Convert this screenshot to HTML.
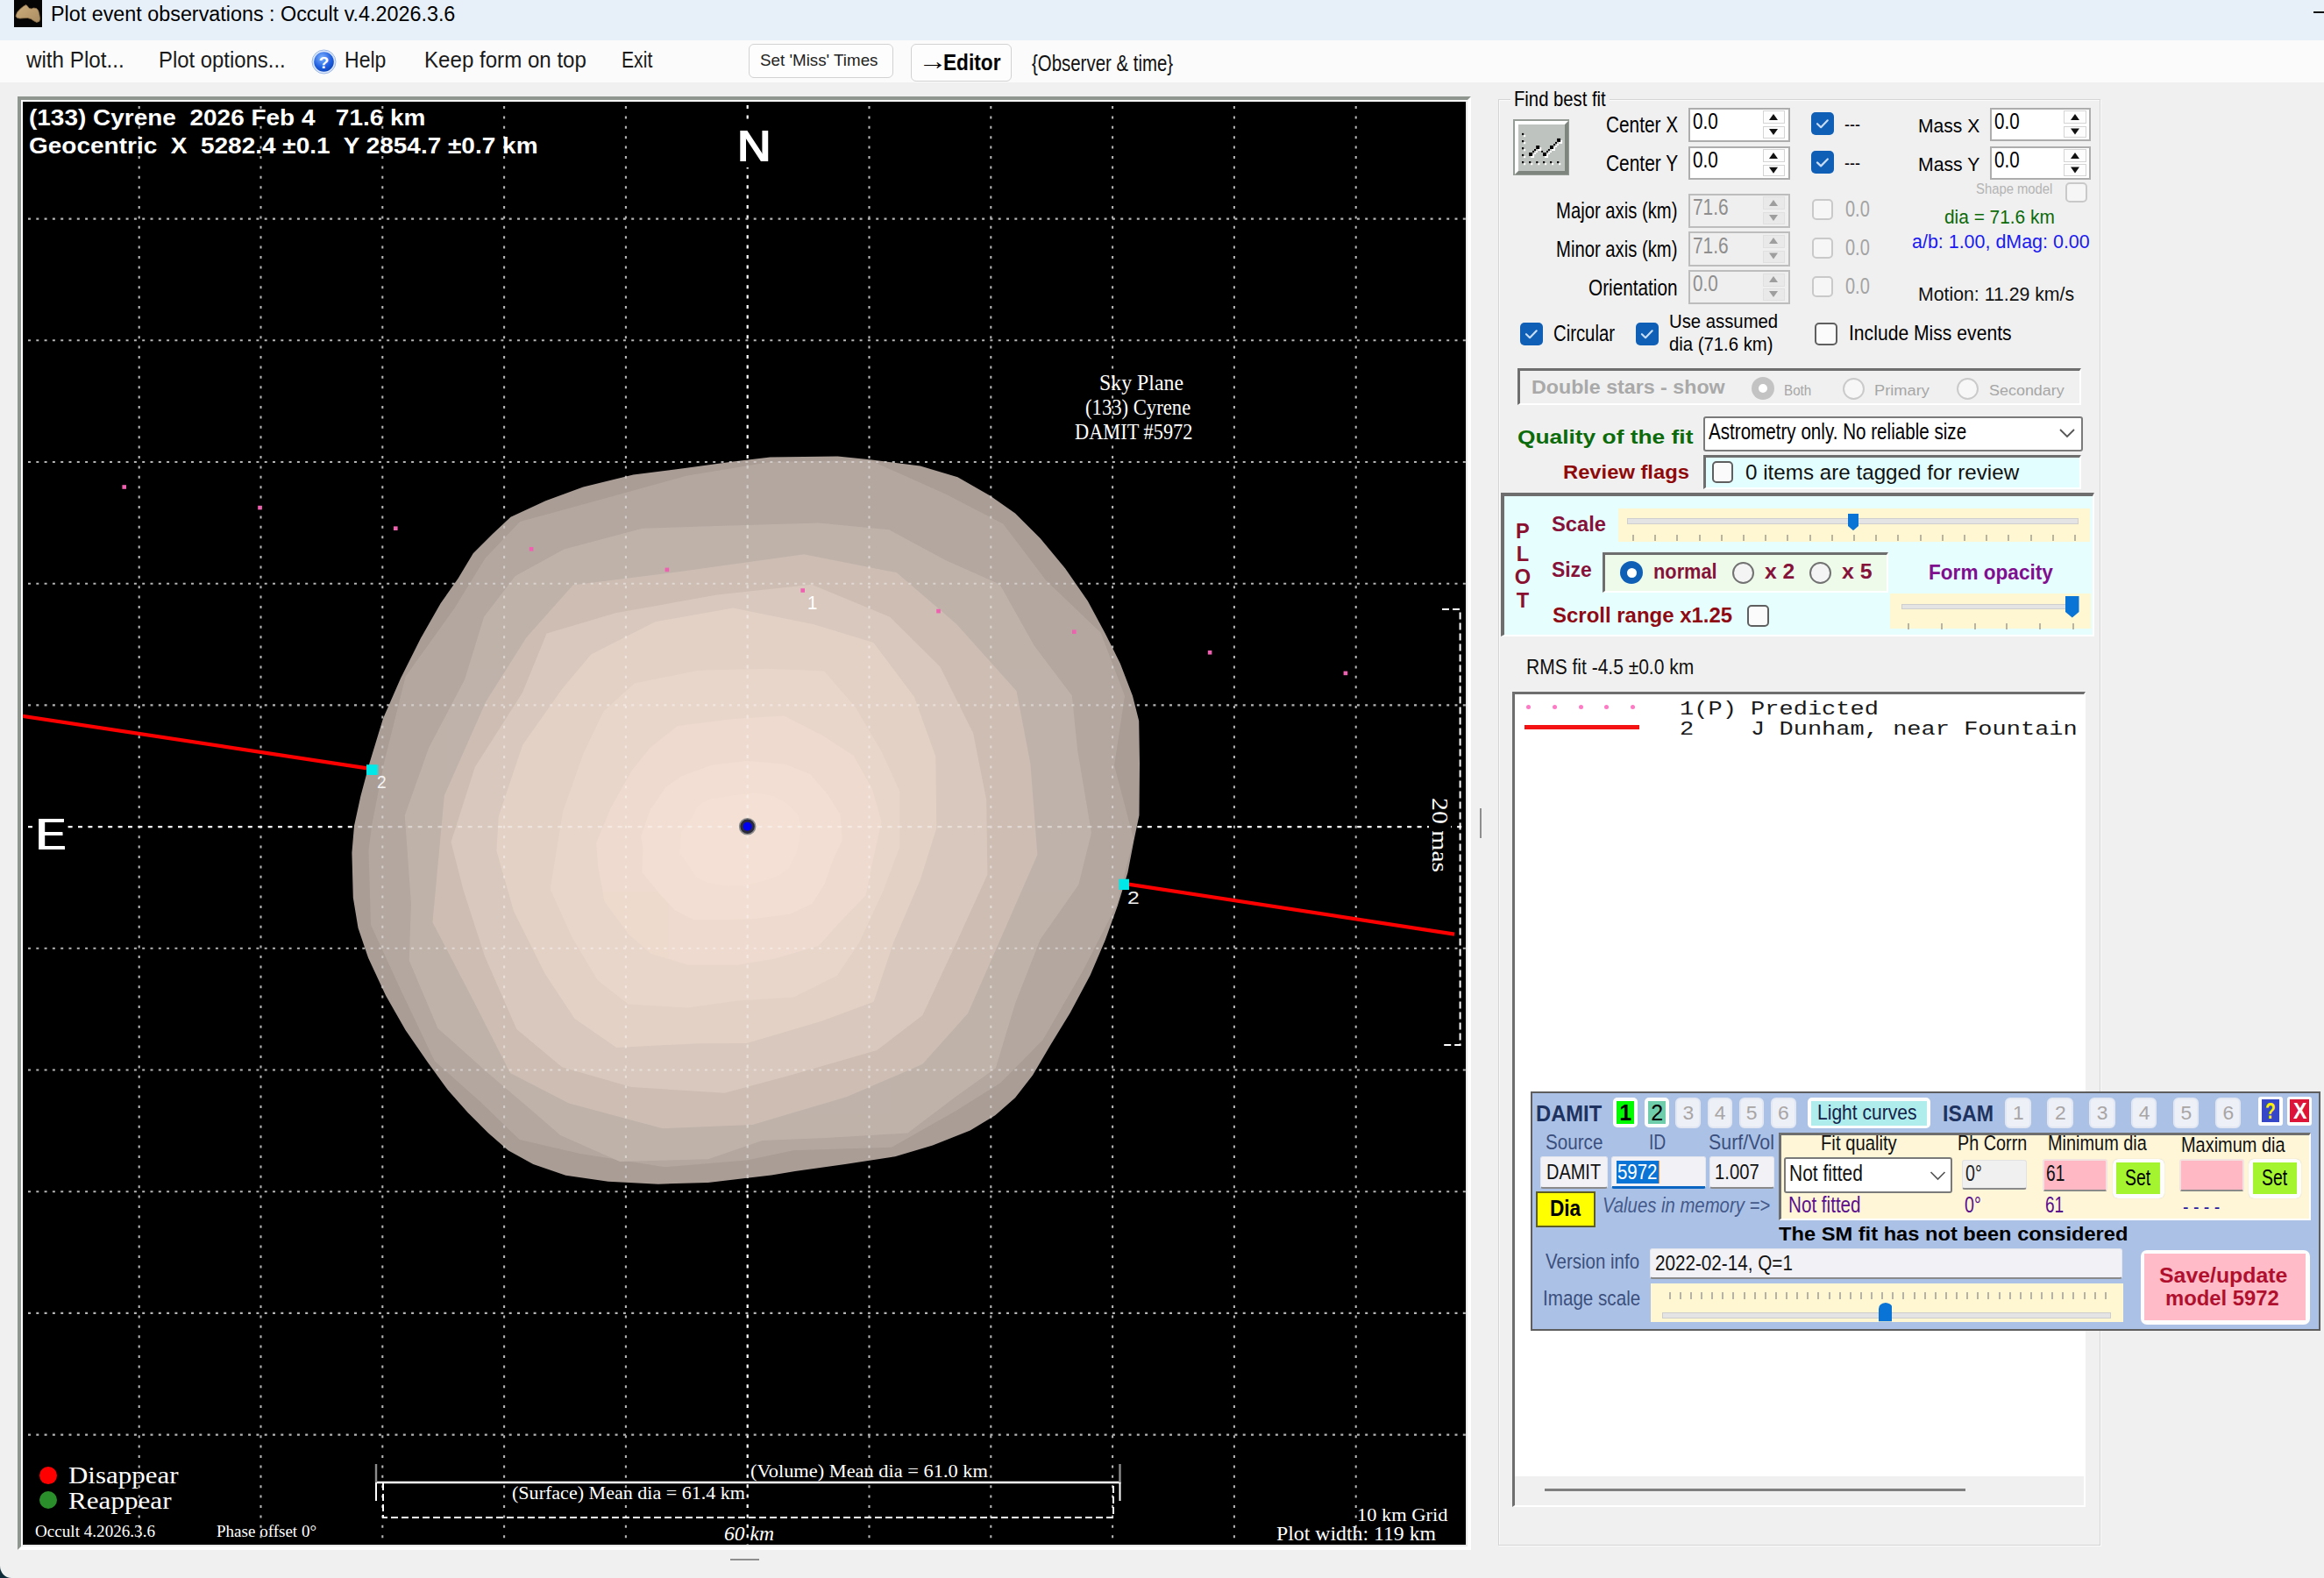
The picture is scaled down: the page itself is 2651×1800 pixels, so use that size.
<!DOCTYPE html><html><head><meta charset="utf-8"><title>Plot event observations : Occult v.4.2026.3.6</title><style>
html,body{margin:0;padding:0}
body{width:2651px;height:1800px;position:relative;overflow:hidden;background:#F0F0F0;font-family:"Liberation Sans",sans-serif;}
div,span.t,svg.abs{position:absolute;box-sizing:border-box}
.t{white-space:pre;line-height:1;transform-origin:0 0;}
.sunk{border-style:solid;border-width:3px 2px 2px 3px;border-color:#6E6E6E #FFFFFF #FFFFFF #6E6E6E}
.cb{border:2px solid #5F5F5F;border-radius:5px;background:#FBFBFB}
.cbd{border:2px solid #C9C9C9;border-radius:5px;background:#F6F6F6}
.cbc{border-radius:5px;background:#0F5FB6}
.num{border:2px solid #ADADAD;background:#fff}
.numd{border:2px solid #BDBDBD;background:#EFEFEF}
.rd{border-radius:50%}
</style></head><body>
<div style="left:0.0px;top:0.0px;width:2651.0px;height:46.0px;background:#E7F0F8"></div>
<div style="left:0.0px;top:46.0px;width:2651.0px;height:48.0px;background:#FBFBFB"></div>
<div style="left:16.0px;top:0.0px;width:31.8px;height:30.8px;background:#050505"><svg width="32" height="31" viewBox="0 0 32 31" style="position:absolute;left:0;top:0"><defs><linearGradient id="ig" x1="0" y1="0" x2="1" y2="1"><stop offset="0" stop-color="#CDAE7C"/><stop offset="1" stop-color="#A98C62"/></linearGradient></defs><path d="M2 18.3 L3.6 14 L7.2 10.1 L11.1 6.9 L13.9 5.6 L15.4 7.1 L17.1 9.3 L19.7 10.1 L22.5 9.1 L25.8 9.7 L27.7 12.1 L28.8 16.2 L29.6 21.6 L28.8 24.4 L25.8 25.4 L22.5 23.7 L19.3 21.6 L15.4 20.5 L11.1 20.7 L6.8 21.1 L3.6 20.5Z" fill="url(#ig)" stroke="#8A7048" stroke-width="0.8" stroke-linejoin="round"/></svg></div>
<span class="t" style="left:58.0px;top:4.3px;font-size:23.92px;color:#000;transform:scaleX(0.9761);">Plot event observations : Occult v.4.2026.3.6</span>
<div style="left:2639.0px;top:13.0px;width:12.0px;height:2.0px;background:#111"></div>
<span class="t" style="left:30.2px;top:56.2px;font-size:24.96px;color:#1A1A1A;transform:scaleX(0.9702);">with Plot...</span>
<span class="t" style="left:180.7px;top:56.2px;font-size:24.96px;color:#1A1A1A;transform:scaleX(0.9568);">Plot options...</span>
<svg class="abs" style="left:355px;top:56px" width="29" height="29" viewBox="0 0 29 29"><defs><radialGradient id="hg" cx="0.4" cy="0.3" r="0.8"><stop offset="0" stop-color="#7FB2FF"/><stop offset="0.6" stop-color="#1F5FE0"/><stop offset="1" stop-color="#0A3FB0"/></radialGradient></defs><circle cx="14.5" cy="14.5" r="13.5" fill="#DCE8FA" stroke="#9DB9E8" stroke-width="1"/><circle cx="14.5" cy="14.5" r="11.3" fill="url(#hg)"/><text x="14.5" y="21.5" text-anchor="middle" font-family="Liberation Sans,sans-serif" font-weight="bold" font-size="19" fill="#fff">?</text></svg>
<span class="t" style="left:393.0px;top:56.2px;font-size:24.96px;color:#1A1A1A;transform:scaleX(0.9233);">Help</span>
<span class="t" style="left:484.3px;top:56.2px;font-size:24.96px;color:#1A1A1A;transform:scaleX(0.9661);">Keep form on top</span>
<span class="t" style="left:709.0px;top:56.2px;font-size:24.96px;color:#1A1A1A;transform:scaleX(0.8484);">Exit</span>
<div style="left:853.6px;top:49.7px;width:165.1px;height:39.2px;background:#FDFDFD;border:1.5px solid #D2D2D2;border-radius:6px"></div>
<span class="t" style="left:866.6px;top:59.5px;font-size:18.72px;color:#222;transform:scaleX(1.0041);">Set 'Miss' Times</span>
<div style="left:1038.9px;top:49.7px;width:115.3px;height:43.1px;background:#FDFDFD;border:1.5px solid #D2D2D2;border-radius:6px"></div>
<span class="t" style="left:1046.5px;top:57.1px;font-size:27.04px;color:#000;font-weight:bold;transform:scaleX(1.2389);">→</span>
<span class="t" style="left:1075.8px;top:58.7px;font-size:24.96px;color:#000;font-weight:bold;transform:scaleX(0.9084);">Editor</span>
<span class="t" style="left:1177.4px;top:60.2px;font-size:24.96px;color:#111;transform:scaleX(0.8183);">{Observer &amp; time}</span>
<div style="left:20.3px;top:110.1px;width:1657.7px;height:1657.9px;border-style:solid;border-width:4px;border-color:#8F958F #FFFFFF #FFFFFF #8F958F;background:#000"></div>
<div style="left:24.3px;top:114.1px;width:1649.7px;height:1649.9px;border-style:solid;border-width:2px;border-color:#FFFFFF #EAEAEA #EAEAEA #FFFFFF;background:#000"></div>
<svg class="abs" style="left:0;top:0" width="2651" height="1800" viewBox="0 0 2651 1800"><defs>
<clipPath id="pc"><rect x="26.2" y="116.2" width="1645.8" height="1645.8"/></clipPath>
<radialGradient id="ag" gradientUnits="userSpaceOnUse" cx="840" cy="925" r="500" fx="830" fy="900">
<stop offset="0" stop-color="#F4E0D4"/><stop offset="0.35" stop-color="#F1DCD0"/><stop offset="0.58" stop-color="#E3CFC4"/><stop offset="0.75" stop-color="#D0BEB4"/><stop offset="0.88" stop-color="#B9A9A1"/><stop offset="1" stop-color="#A1938D"/></radialGradient>
</defs><clipPath id="ac"><path d="M404.0 942.0 L411.4 907.9 L421.4 870.8 L437.0 819.5 L457.0 773.8 L479.8 728.2 L502.6 688.2 L522.6 659.7 L539.7 631.2 L562.5 608.4 L582.5 589.8 L622.4 571.3 L665.2 555.6 L722.3 541.4 L779.3 534.2 L836.4 526.5 L878.5 521.5 L955.5 520.5 L992.6 524.2 L1049.7 531.4 L1092.4 544.2 L1129.5 565.6 L1158.0 585.6 L1186.6 614.0 L1215.0 648.3 L1240.8 685.4 L1260.7 722.5 L1277.8 756.7 L1292.0 793.8 L1299.2 822.3 L1300.0 870.8 L1299.5 930.0 L1293.5 958.5 L1286.4 995.6 L1275.0 1032.7 L1260.7 1072.6 L1243.6 1112.5 L1220.8 1155.3 L1198.0 1192.4 L1178.0 1226.6 L1158.0 1252.3 L1135.2 1272.3 L1106.7 1289.4 L1063.9 1306.5 L1021.1 1319.3 L964.1 1327.9 L907.0 1336.0 L880.0 1340.5 L850.0 1344.0 L807.8 1349.0 L750.8 1350.7 L693.7 1347.8 L645.3 1340.7 L608.2 1327.9 L579.7 1312.2 L556.8 1292.2 L534.0 1269.4 L511.2 1243.8 L488.4 1212.4 L462.7 1175.3 L440.0 1135.4 L420.0 1092.6 L408.5 1058.4 L402.8 1024.1 L401.4 972.8Z"/></clipPath><g clip-path="url(#pc)"><g opacity="1.0" fill="none"><line x1="158.7" y1="121" x2="158.7" y2="1762" stroke="#B4B4B4" stroke-width="2.1" stroke-dasharray="3 8.4"/><line x1="297.5" y1="121" x2="297.5" y2="1762" stroke="#B4B4B4" stroke-width="2.1" stroke-dasharray="3 8.4"/><line x1="436.3" y1="121" x2="436.3" y2="1762" stroke="#B4B4B4" stroke-width="2.1" stroke-dasharray="3 8.4"/><line x1="575.1" y1="121" x2="575.1" y2="1762" stroke="#B4B4B4" stroke-width="2.1" stroke-dasharray="3 8.4"/><line x1="713.9" y1="121" x2="713.9" y2="1762" stroke="#B4B4B4" stroke-width="2.1" stroke-dasharray="3 8.4"/><line x1="852.7" y1="120" x2="852.7" y2="1762" stroke="#FFFFFF" stroke-width="2.2" stroke-dasharray="4 7.4"/><line x1="991.5" y1="121" x2="991.5" y2="1762" stroke="#B4B4B4" stroke-width="2.1" stroke-dasharray="3 8.4"/><line x1="1130.3" y1="121" x2="1130.3" y2="1762" stroke="#B4B4B4" stroke-width="2.1" stroke-dasharray="3 8.4"/><line x1="1269.1" y1="121" x2="1269.1" y2="1762" stroke="#B4B4B4" stroke-width="2.1" stroke-dasharray="3 8.4"/><line x1="1407.9" y1="121" x2="1407.9" y2="1762" stroke="#B4B4B4" stroke-width="2.1" stroke-dasharray="3 8.4"/><line x1="1546.7" y1="121" x2="1546.7" y2="1762" stroke="#B4B4B4" stroke-width="2.1" stroke-dasharray="3 8.4"/><line x1="32" y1="249.6" x2="1672" y2="249.6" stroke="#B4B4B4" stroke-width="2.1" stroke-dasharray="3 6.3"/><line x1="32" y1="388.3" x2="1672" y2="388.3" stroke="#B4B4B4" stroke-width="2.1" stroke-dasharray="3 6.3"/><line x1="32" y1="527.0" x2="1672" y2="527.0" stroke="#B4B4B4" stroke-width="2.1" stroke-dasharray="3 6.3"/><line x1="32" y1="665.7" x2="1672" y2="665.7" stroke="#B4B4B4" stroke-width="2.1" stroke-dasharray="3 6.3"/><line x1="32" y1="804.4" x2="1672" y2="804.4" stroke="#B4B4B4" stroke-width="2.1" stroke-dasharray="3 6.3"/><line x1="32" y1="943.1" x2="1672" y2="943.1" stroke="#FFFFFF" stroke-width="2.1" stroke-dasharray="5 6.4"/><line x1="32" y1="1081.8" x2="1672" y2="1081.8" stroke="#B4B4B4" stroke-width="2.1" stroke-dasharray="3 6.3"/><line x1="32" y1="1220.5" x2="1672" y2="1220.5" stroke="#B4B4B4" stroke-width="2.1" stroke-dasharray="3 6.3"/><line x1="32" y1="1359.2" x2="1672" y2="1359.2" stroke="#B4B4B4" stroke-width="2.1" stroke-dasharray="3 6.3"/><line x1="32" y1="1497.9" x2="1672" y2="1497.9" stroke="#B4B4B4" stroke-width="2.1" stroke-dasharray="3 6.3"/><line x1="32" y1="1636.6" x2="1672" y2="1636.6" stroke="#B4B4B4" stroke-width="2.1" stroke-dasharray="3 6.3"/></g><path d="M404.0 942.0 L411.4 907.9 L421.4 870.8 L437.0 819.5 L457.0 773.8 L479.8 728.2 L502.6 688.2 L522.6 659.7 L539.7 631.2 L562.5 608.4 L582.5 589.8 L622.4 571.3 L665.2 555.6 L722.3 541.4 L779.3 534.2 L836.4 526.5 L878.5 521.5 L955.5 520.5 L992.6 524.2 L1049.7 531.4 L1092.4 544.2 L1129.5 565.6 L1158.0 585.6 L1186.6 614.0 L1215.0 648.3 L1240.8 685.4 L1260.7 722.5 L1277.8 756.7 L1292.0 793.8 L1299.2 822.3 L1300.0 870.8 L1299.5 930.0 L1293.5 958.5 L1286.4 995.6 L1275.0 1032.7 L1260.7 1072.6 L1243.6 1112.5 L1220.8 1155.3 L1198.0 1192.4 L1178.0 1226.6 L1158.0 1252.3 L1135.2 1272.3 L1106.7 1289.4 L1063.9 1306.5 L1021.1 1319.3 L964.1 1327.9 L907.0 1336.0 L880.0 1340.5 L850.0 1344.0 L807.8 1349.0 L750.8 1350.7 L693.7 1347.8 L645.3 1340.7 L608.2 1327.9 L579.7 1312.2 L556.8 1292.2 L534.0 1269.4 L511.2 1243.8 L488.4 1212.4 L462.7 1175.3 L440.0 1135.4 L420.0 1092.6 L408.5 1058.4 L402.8 1024.1 L401.4 972.8Z" fill="#A99D96"/><g clip-path="url(#ac)"><path d="M424.3 940.2 L437.9 870.6 L462.6 771.6 L518.6 693.4 L553.3 637.1 L593.1 594.9 L678.1 571.8 L783.9 542.4 L879.7 526.7 L992.0 524.8 L1078.6 563.4 L1144.3 597.6 L1193.2 662.0 L1255.7 721.8 L1283.1 793.9 L1271.1 872.9 L1293.1 957.1 L1274.2 1031.7 L1234.8 1108.3 L1189.6 1186.3 L1141.3 1235.3 L1090.6 1267.1 L1017.0 1308.7 L905.2 1312.2 L852.0 1323.4 L758.3 1331.3 L661.6 1315.9 L592.6 1300.1 L549.2 1258.0 L495.7 1210.3 L457.0 1129.0 L423.0 1054.9 L420.4 970.3Z" fill="#B3A7A0"/><path d="M461.7 930.3 L489.1 853.1 L530.0 775.2 L552.1 703.6 L587.8 656.9 L643.4 626.6 L732.7 602.8 L833.0 599.4 L933.9 596.4 L1014.4 604.3 L1078.6 639.0 L1140.5 666.5 L1179.6 736.2 L1222.8 793.6 L1229.2 856.0 L1245.0 949.9 L1230.4 1009.1 L1186.7 1071.4 L1158.1 1144.5 L1135.8 1218.6 L1090.2 1250.9 L1035.4 1292.6 L942.4 1298.0 L869.7 1300.9 L807.8 1322.3 L707.0 1325.1 L639.2 1294.9 L598.8 1259.9 L555.6 1223.2 L499.4 1172.9 L466.7 1095.7 L468.9 1030.8Z" fill="#BFB2AA"/><path d="M506.8 907.4 L554.4 799.9 L600.5 727.1 L653.7 667.2 L780.8 651.3 L917.1 632.2 L1022.7 653.1 L1091.0 711.8 L1159.6 788.2 L1175.4 871.0 L1183.4 975.0 L1145.8 1060.9 L1104.1 1156.0 L1052.2 1214.1 L965.7 1251.2 L858.7 1282.9 L755.7 1287.3 L648.9 1258.5 L581.9 1224.1 L539.2 1140.0 L493.4 1052.0Z" fill="#CDBDB3"/><path d="M514.5 960.5 L541.8 875.1 L596.0 790.1 L623.6 722.5 L703.0 699.1 L817.5 678.5 L925.9 666.7 L1015.3 703.8 L1072.4 760.6 L1110.1 836.2 L1125.2 912.6 L1126.4 997.6 L1090.7 1075.9 L1052.3 1158.2 L1000.4 1197.9 L904.3 1225.8 L826.6 1246.8 L720.0 1240.1 L641.1 1217.2 L589.3 1174.1 L552.9 1090.8 L528.6 1015.6Z" fill="#D9C8BD"/><path d="M568.8 931.0 L596.3 849.4 L640.8 786.5 L674.2 746.4 L747.5 709.2 L836.1 693.6 L928.4 712.3 L996.4 732.9 L1042.9 794.9 L1067.3 862.9 L1068.3 944.7 L1049.5 1004.3 L1019.3 1074.7 L996.6 1142.8 L936.5 1165.0 L851.9 1190.0 L796.7 1190.2 L703.3 1194.9 L655.5 1161.9 L621.5 1110.6 L586.0 1039.4 L566.4 970.5Z" fill="#E3D1C6"/><path d="M642.0 925.9 L665.5 859.5 L688.6 811.3 L723.7 779.4 L796.3 764.7 L874.8 762.7 L940.1 765.5 L976.0 807.0 L1006.2 858.4 L1026.4 902.9 L1026.3 966.3 L1006.7 1018.1 L980.7 1073.9 L955.0 1112.8 L905.4 1137.4 L841.4 1141.5 L784.2 1149.4 L716.9 1145.6 L681.8 1118.2 L652.7 1069.8 L627.7 1014.2Z" fill="#E9D6CA"/><path d="M680.1 961.7 L696.7 921.4 L720.6 878.9 L741.5 853.1 L773.0 827.9 L836.4 819.9 L894.2 816.6 L938.4 839.1 L973.7 861.9 L994.8 899.4 L1005.6 937.3 L996.1 979.4 L987.7 1021.1 L955.7 1054.5 L933.8 1079.0 L883.0 1093.7 L841.3 1100.8 L784.2 1100.5 L742.8 1088.1 L717.1 1065.4 L689.7 1028.7 L682.3 989.0Z" fill="#EEDACE"/><path d="M731.2 953.9 L741.5 923.9 L758.9 898.5 L776.8 885.4 L811.5 872.7 L852.3 867.8 L896.2 871.8 L924.4 883.3 L944.0 906.1 L958.6 929.0 L960.7 958.8 L950.4 980.5 L940.7 1008.2 L926.4 1031.1 L901.0 1042.7 L859.7 1048.3 L834.2 1049.1 L791.6 1049.4 L769.4 1037.9 L752.7 1019.9 L732.3 994.9 L733.4 967.8Z" fill="#F2DED2"/><path d="M777.0 949.1 L789.2 932.1 L796.3 918.7 L809.5 911.4 L834.1 907.6 L861.6 904.2 L882.7 907.9 L897.8 916.4 L910.8 929.7 L913.7 943.4 L911.6 960.3 L908.0 974.6 L899.8 990.4 L888.4 999.3 L871.0 1005.0 L849.7 1010.2 L829.3 1010.7 L807.4 1007.0 L794.4 1000.9 L785.3 987.5 L775.4 973.2Z" fill="#F4E0D4"/></g><g clip-path="url(#ac)"><g opacity="0.42" fill="none"><line x1="158.7" y1="121" x2="158.7" y2="1762" stroke="#FFFFFF" stroke-width="2.1" stroke-dasharray="3 8.4"/><line x1="297.5" y1="121" x2="297.5" y2="1762" stroke="#FFFFFF" stroke-width="2.1" stroke-dasharray="3 8.4"/><line x1="436.3" y1="121" x2="436.3" y2="1762" stroke="#FFFFFF" stroke-width="2.1" stroke-dasharray="3 8.4"/><line x1="575.1" y1="121" x2="575.1" y2="1762" stroke="#FFFFFF" stroke-width="2.1" stroke-dasharray="3 8.4"/><line x1="713.9" y1="121" x2="713.9" y2="1762" stroke="#FFFFFF" stroke-width="2.1" stroke-dasharray="3 8.4"/><line x1="852.7" y1="120" x2="852.7" y2="1762" stroke="#FFFFFF" stroke-width="2.2" stroke-dasharray="4 7.4"/><line x1="991.5" y1="121" x2="991.5" y2="1762" stroke="#FFFFFF" stroke-width="2.1" stroke-dasharray="3 8.4"/><line x1="1130.3" y1="121" x2="1130.3" y2="1762" stroke="#FFFFFF" stroke-width="2.1" stroke-dasharray="3 8.4"/><line x1="1269.1" y1="121" x2="1269.1" y2="1762" stroke="#FFFFFF" stroke-width="2.1" stroke-dasharray="3 8.4"/><line x1="1407.9" y1="121" x2="1407.9" y2="1762" stroke="#FFFFFF" stroke-width="2.1" stroke-dasharray="3 8.4"/><line x1="1546.7" y1="121" x2="1546.7" y2="1762" stroke="#FFFFFF" stroke-width="2.1" stroke-dasharray="3 8.4"/><line x1="32" y1="249.6" x2="1672" y2="249.6" stroke="#FFFFFF" stroke-width="2.1" stroke-dasharray="3 6.3"/><line x1="32" y1="388.3" x2="1672" y2="388.3" stroke="#FFFFFF" stroke-width="2.1" stroke-dasharray="3 6.3"/><line x1="32" y1="527.0" x2="1672" y2="527.0" stroke="#FFFFFF" stroke-width="2.1" stroke-dasharray="3 6.3"/><line x1="32" y1="665.7" x2="1672" y2="665.7" stroke="#FFFFFF" stroke-width="2.1" stroke-dasharray="3 6.3"/><line x1="32" y1="804.4" x2="1672" y2="804.4" stroke="#FFFFFF" stroke-width="2.1" stroke-dasharray="3 6.3"/><line x1="32" y1="943.1" x2="1672" y2="943.1" stroke="#FFFFFF" stroke-width="2.1" stroke-dasharray="5 6.4"/><line x1="32" y1="1081.8" x2="1672" y2="1081.8" stroke="#FFFFFF" stroke-width="2.1" stroke-dasharray="3 6.3"/><line x1="32" y1="1220.5" x2="1672" y2="1220.5" stroke="#FFFFFF" stroke-width="2.1" stroke-dasharray="3 6.3"/><line x1="32" y1="1359.2" x2="1672" y2="1359.2" stroke="#FFFFFF" stroke-width="2.1" stroke-dasharray="3 6.3"/><line x1="32" y1="1497.9" x2="1672" y2="1497.9" stroke="#FFFFFF" stroke-width="2.1" stroke-dasharray="3 6.3"/><line x1="32" y1="1636.6" x2="1672" y2="1636.6" stroke="#FFFFFF" stroke-width="2.1" stroke-dasharray="3 6.3"/></g></g><rect x="139.4" y="553.2" width="4.6" height="4.6" fill="#F060B0"/><rect x="294.2" y="576.8" width="4.6" height="4.6" fill="#F060B0"/><rect x="449.0" y="600.4" width="4.6" height="4.6" fill="#F060B0"/><rect x="603.8" y="624.0" width="4.6" height="4.6" fill="#F060B0"/><rect x="758.6" y="647.6" width="4.6" height="4.6" fill="#F060B0"/><rect x="913.4" y="671.2" width="4.6" height="4.6" fill="#F060B0"/><rect x="1068.2" y="694.8" width="4.6" height="4.6" fill="#F060B0"/><rect x="1223.0" y="718.4" width="4.6" height="4.6" fill="#F060B0"/><rect x="1377.8" y="742.0" width="4.6" height="4.6" fill="#F060B0"/><rect x="1532.6" y="765.6" width="4.6" height="4.6" fill="#F060B0"/><line x1="24.5" y1="816.6" x2="419" y2="876.4" stroke="#F00" stroke-width="4.2"/><line x1="1287" y1="1008.6" x2="1659" y2="1065.6" stroke="#F00" stroke-width="4.2"/><rect x="418" y="872.2" width="13" height="11.8" fill="#00E8E8"/><rect x="1276.4" y="1002.7" width="11.6" height="12.3" fill="#00E8E8"/><circle cx="852.6" cy="942.8" r="9" fill="#2A2A3A" stroke="#8A8A8A" stroke-width="1.6"/><circle cx="852.6" cy="942.8" r="5" fill="#0000F0"/><g stroke="#FFF" fill="none"><line x1="428" y1="1691" x2="1278.5" y2="1691" stroke-width="2.4"/><line x1="429" y1="1691" x2="429" y2="1712" stroke-width="2"/><line x1="1277.5" y1="1691" x2="1277.5" y2="1712" stroke-width="2"/><line x1="429" y1="1670" x2="429" y2="1691" stroke="#8C8C8C" stroke-width="2.4"/><line x1="1277.5" y1="1670" x2="1277.5" y2="1691" stroke="#8C8C8C" stroke-width="2.4"/><path d="M437 1692 V1731 H1270 V1692" stroke-width="2" stroke-dasharray="8 4"/></g><g stroke="#FFF" fill="none" stroke-width="2"><path d="M1645 695 H1665.6 V1192 H1645" stroke-dasharray="8 4"/></g><circle cx="55" cy="1683.1" r="10" fill="#FF0000"/><circle cx="55" cy="1711" r="10" fill="#2A8F2A"/></g></svg>
<span class="t" style="left:32.5px;top:121.0px;font-size:26.0px;color:#FFFFFF;font-weight:bold;transform:scaleX(1.0759);">(133) Cyrene  2026 Feb 4   71.6 km</span>
<span class="t" style="left:32.5px;top:153.3px;font-size:26.0px;color:#FFFFFF;font-weight:bold;transform:scaleX(1.0765);">Geocentric  X  5282.4 ±0.1  Y 2854.7 ±0.7 km</span>
<span class="t" style="left:839.9px;top:142.2px;font-size:49.3px;color:#fff;background:#000;text-shadow:0.7px 0 0 #fff,1.5px 0 0 #fff,2.2px 0 0 #fff;transform:scaleX(1.0747)">N</span>
<span class="t" style="left:40.0px;top:928.0px;font-size:49.6px;color:#fff;background:#000;text-shadow:0.8px 0 0 #fff,1.6px 0 0 #fff,2.3px 0 0 #fff;transform:scaleX(1.0255)">E</span>
<span class="t" style="left:1254.3px;top:424.0px;font-size:26px;color:#FFFFFF;font-family:'Liberation Serif',serif;transform:scaleX(0.9167);">Sky Plane</span>
<span class="t" style="left:1237.8px;top:452.0px;font-size:26px;color:#FFFFFF;font-family:'Liberation Serif',serif;transform:scaleX(0.8716);">(133) Cyrene</span>
<span class="t" style="left:1225.9px;top:479.9px;font-size:26px;color:#FFFFFF;font-family:'Liberation Serif',serif;transform:scaleX(0.8608);">DAMIT #5972</span>
<span class="t" style="left:921.3px;top:676.9px;font-size:21.84px;color:#FFFFFF;transform:scaleX(0.9385);">1</span>
<span class="t" style="left:429.8px;top:881.5px;font-size:20.8px;color:#F4F4F4;transform:scaleX(0.9249);">2</span>
<span class="t" style="left:1286.4px;top:1013.7px;font-size:20.8px;color:#F4F4F4;transform:scaleX(1.1843);">2</span>
<span class="t" style="left:77.5px;top:1669.3px;font-size:28px;color:#FFFFFF;font-family:'Liberation Serif',serif;transform:scaleX(1.1057);">Disappear</span>
<span class="t" style="left:77.5px;top:1698.0px;font-size:28px;color:#FFFFFF;font-family:'Liberation Serif',serif;transform:scaleX(1.1115);">Reappear</span>
<span class="t" style="left:40.0px;top:1736.7px;font-size:19.5px;color:#FFFFFF;font-family:'Liberation Serif',serif;transform:scaleX(0.9805);">Occult 4.2026.3.6</span>
<span class="t" style="left:247.0px;top:1736.7px;font-size:19.5px;color:#FFFFFF;font-family:'Liberation Serif',serif;transform:scaleX(0.9757);">Phase offset 0°</span>
<span class="t" style="left:584.0px;top:1692.9px;font-size:21.6px;color:#FFFFFF;font-family:'Liberation Serif',serif;transform:scaleX(1.0211);">(Surface) Mean dia = 61.4 km</span>
<span class="t" style="left:856.0px;top:1667.9px;font-size:21.6px;color:#FFFFFF;font-family:'Liberation Serif',serif;transform:scaleX(1.0370);">(Volume) Mean dia = 61.0 km</span>
<span class="t" style="left:826.3px;top:1737.4px;font-size:24px;color:#FFFFFF;font-family:'Liberation Serif',serif;font-style:italic;transform:scaleX(0.9830);">60 km</span>
<span class="t" style="left:1547.5px;top:1716.6px;font-size:22px;color:#FFFFFF;font-family:'Liberation Serif',serif;transform:scaleX(1.0203);">10 km Grid</span>
<span class="t" style="left:1455.7px;top:1737.4px;font-size:24px;color:#FFFFFF;font-family:'Liberation Serif',serif;transform:scaleX(0.9902);">Plot width: 119 km</span>
<span class="t" style="left:1655px;top:909.7px;font-size:25px;color:#fff;font-family:'Liberation Serif',serif;transform-origin:0 0;transform:rotate(90deg) scaleX(1.1913);background:#000;line-height:1">20 mas</span>
<div style="left:1687.5px;top:922.0px;width:2.0px;height:33.5px;background:#8E8E8E"></div>
<div style="left:833.0px;top:1777.8px;width:33.0px;height:2.0px;background:#8E8E8E"></div>
<svg class="abs" style="left:0;top:1786px" width="14" height="14" viewBox="0 0 14 14"><path d="M0 0 A13 14 0 0 0 13 14 L0 14Z" fill="#0E2C3A"/></svg>
<div style="left:1708.5px;top:113.0px;width:687.5px;height:1650.0px;border:1.5px solid #D5D5D5;box-shadow:1px 1px 0 #FBFBFB, inset 1px 1px 0 #FBFBFB"></div>
<div style="left:1723.0px;top:100.0px;width:113.0px;height:28.0px;background:#F0F0F0"></div>
<span class="t" style="left:1727.0px;top:100.9px;font-size:24.65px;color:#000;transform:scaleX(0.8217);">Find best fit</span>
<div style="left:1726.0px;top:136.0px;width:64.0px;height:64.0px;background:#959C95"></div>
<div style="left:1727.5px;top:137.5px;width:61.0px;height:61.0px;border-style:solid;border-width:4.5px;border-color:#FFFFFF #7E857F #7E857F #FFFFFF;background:#BFC3BF"></div>
<svg class="abs" style="left:1726px;top:136px" width="64" height="64" viewBox="0 0 64 64"><rect x="12.0" y="17.9" width="2.2" height="2.2" fill="#fff"/><rect x="10.0" y="15.9" width="2.2" height="2.2" fill="#000"/><rect x="12.0" y="26.0" width="2.2" height="2.2" fill="#fff"/><rect x="10.0" y="24.0" width="2.2" height="2.2" fill="#000"/><rect x="12.0" y="34.1" width="2.2" height="2.2" fill="#fff"/><rect x="10.0" y="32.1" width="2.2" height="2.2" fill="#000"/><rect x="12.0" y="41.9" width="2.2" height="2.2" fill="#fff"/><rect x="10.0" y="39.9" width="2.2" height="2.2" fill="#000"/><rect x="12.0" y="50.0" width="2.2" height="2.2" fill="#fff"/><rect x="10.0" y="48.0" width="2.2" height="2.2" fill="#000"/><rect x="20.1" y="50.0" width="2.2" height="2.2" fill="#fff"/><rect x="18.1" y="48.0" width="2.2" height="2.2" fill="#000"/><rect x="28.2" y="50.0" width="2.2" height="2.2" fill="#fff"/><rect x="26.2" y="48.0" width="2.2" height="2.2" fill="#000"/><rect x="36.0" y="50.0" width="2.2" height="2.2" fill="#fff"/><rect x="34.0" y="48.0" width="2.2" height="2.2" fill="#000"/><rect x="44.0" y="50.0" width="2.2" height="2.2" fill="#fff"/><rect x="42.0" y="48.0" width="2.2" height="2.2" fill="#000"/><rect x="52.1" y="50.0" width="2.2" height="2.2" fill="#fff"/><rect x="50.1" y="48.0" width="2.2" height="2.2" fill="#000"/><rect x="24.1" y="37.9" width="2" height="2" fill="#fff"/><rect x="22.1" y="35.9" width="2" height="2" fill="#000"/><rect x="26.0" y="36.0" width="2" height="2" fill="#fff"/><rect x="24.0" y="34.0" width="2" height="2" fill="#000"/><rect x="32.0" y="36.0" width="2" height="2" fill="#fff"/><rect x="30.0" y="34.0" width="2" height="2" fill="#000"/><rect x="34.1" y="37.9" width="2" height="2" fill="#fff"/><rect x="32.1" y="35.9" width="2" height="2" fill="#000"/><rect x="40.0" y="37.9" width="2" height="2" fill="#fff"/><rect x="38.0" y="35.9" width="2" height="2" fill="#000"/><rect x="41.9" y="36.0" width="2" height="2" fill="#fff"/><rect x="39.9" y="34.0" width="2" height="2" fill="#000"/><rect x="48.1" y="30.0" width="2" height="2" fill="#fff"/><rect x="46.1" y="28.0" width="2" height="2" fill="#000"/><rect x="50.0" y="27.9" width="2" height="2" fill="#fff"/><rect x="48.0" y="25.9" width="2" height="2" fill="#000"/><rect x="20.1" y="40.0" width="4" height="4" fill="#fff"/><rect x="18.1" y="38.0" width="4" height="4" fill="#000"/><rect x="28.2" y="32.0" width="4" height="4" fill="#fff"/><rect x="26.2" y="30.0" width="4" height="4" fill="#000"/><rect x="36.0" y="40.0" width="4" height="4" fill="#fff"/><rect x="34.0" y="38.0" width="4" height="4" fill="#000"/><rect x="44.0" y="32.0" width="4" height="4" fill="#fff"/><rect x="42.0" y="30.0" width="4" height="4" fill="#000"/><rect x="52.1" y="23.9" width="4" height="4" fill="#fff"/><rect x="50.1" y="21.9" width="4" height="4" fill="#000"/></svg>
<span class="t" style="left:1831.7px;top:130.1px;font-size:24.96px;color:#000;transform:scaleX(0.8335);">Center X</span>
<span class="t" style="left:1831.7px;top:174.2px;font-size:24.96px;color:#000;transform:scaleX(0.8373);">Center Y</span>
<span class="t" style="left:1775.0px;top:228.1px;font-size:24.96px;color:#000;transform:scaleX(0.8120);">Major axis (km)</span>
<span class="t" style="left:1775.0px;top:271.9px;font-size:24.96px;color:#000;transform:scaleX(0.8120);">Minor axis (km)</span>
<span class="t" style="left:1811.5px;top:315.7px;font-size:24.96px;color:#000;transform:scaleX(0.8313);">Orientation</span>
<div class="num" style="left:1926.1px;top:122.5px;width:115.9px;height:39.1px;"></div>
<div style="left:2010.5px;top:126.0px;width:25.5px;height:15.1px;background:#FDFDFD;border:1px solid #D4D4D4"></div>
<div style="left:2010.5px;top:143.6px;width:25.5px;height:14.0px;background:#FDFDFD;border:1px solid #D4D4D4"></div>
<svg class="abs" style="left:2016.2px;top:128.5px" width="14" height="27.1" viewBox="0 0 14 27.1"><path d="M7 1 L12 8 H2Z" fill="#111"/><path d="M7 25.1 L12 18.1 H2Z" fill="#111"/></svg>
<span class="t" style="left:1930.8px;top:126.0px;font-size:25.48px;color:#000;transform:scaleX(0.8102);">0.0</span>
<div class="num" style="left:1926.1px;top:166.7px;width:115.9px;height:38.7px;"></div>
<div style="left:2010.5px;top:170.2px;width:25.5px;height:14.9px;background:#FDFDFD;border:1px solid #D4D4D4"></div>
<div style="left:2010.5px;top:187.6px;width:25.5px;height:13.8px;background:#FDFDFD;border:1px solid #D4D4D4"></div>
<svg class="abs" style="left:2016.2px;top:172.7px" width="14" height="26.7" viewBox="0 0 14 26.7"><path d="M7 1 L12 8 H2Z" fill="#111"/><path d="M7 24.7 L12 17.7 H2Z" fill="#111"/></svg>
<span class="t" style="left:1930.8px;top:170.0px;font-size:25.48px;color:#000;transform:scaleX(0.8102);">0.0</span>
<div class="numd" style="left:1926.1px;top:220.6px;width:115.9px;height:39.0px;"></div>
<div style="left:2010.5px;top:224.1px;width:25.5px;height:15.0px;background:#E9E9E9;border:1px solid #E0E0E0"></div>
<div style="left:2010.5px;top:241.6px;width:25.5px;height:14.0px;background:#E9E9E9;border:1px solid #E0E0E0"></div>
<svg class="abs" style="left:2016.2px;top:226.6px" width="14" height="27.0" viewBox="0 0 14 27.0"><path d="M7 1 L12 8 H2Z" fill="#9E9E9E"/><path d="M7 25.0 L12 18.0 H2Z" fill="#9E9E9E"/></svg>
<span class="t" style="left:1930.8px;top:223.8px;font-size:25.48px;color:#8E8E8E;transform:scaleX(0.8207);">71.6</span>
<div class="numd" style="left:1926.1px;top:264.3px;width:115.9px;height:39.5px;"></div>
<div style="left:2010.5px;top:267.8px;width:25.5px;height:15.2px;background:#E9E9E9;border:1px solid #E0E0E0"></div>
<div style="left:2010.5px;top:285.6px;width:25.5px;height:14.2px;background:#E9E9E9;border:1px solid #E0E0E0"></div>
<svg class="abs" style="left:2016.2px;top:270.3px" width="14" height="27.5" viewBox="0 0 14 27.5"><path d="M7 1 L12 8 H2Z" fill="#9E9E9E"/><path d="M7 25.5 L12 18.5 H2Z" fill="#9E9E9E"/></svg>
<span class="t" style="left:1930.8px;top:267.6px;font-size:25.48px;color:#8E8E8E;transform:scaleX(0.8207);">71.6</span>
<div class="numd" style="left:1926.1px;top:308.4px;width:115.9px;height:39.0px;"></div>
<div style="left:2010.5px;top:311.9px;width:25.5px;height:15.0px;background:#E9E9E9;border:1px solid #E0E0E0"></div>
<div style="left:2010.5px;top:329.4px;width:25.5px;height:14.0px;background:#E9E9E9;border:1px solid #E0E0E0"></div>
<svg class="abs" style="left:2016.2px;top:314.4px" width="14" height="27.0" viewBox="0 0 14 27.0"><path d="M7 1 L12 8 H2Z" fill="#9E9E9E"/><path d="M7 25.0 L12 18.0 H2Z" fill="#9E9E9E"/></svg>
<span class="t" style="left:1930.8px;top:311.4px;font-size:25.48px;color:#8E8E8E;transform:scaleX(0.8102);">0.0</span>
<div class="cbc" style="left:2066.2px;top:128.1px;width:25.8px;height:25.5px;"><svg width="25.8" height="25.5" viewBox="0 0 26 26" style="position:absolute;left:0;top:0"><path d="M7 13.5 L11.2 17.5 L19 9.5" fill="none" stroke="#C9DEF6" stroke-width="2.2" stroke-linecap="round" stroke-linejoin="round"/></svg></div>
<div class="cbc" style="left:2066.2px;top:172.0px;width:25.8px;height:25.8px;"><svg width="25.8" height="25.8" viewBox="0 0 26 26" style="position:absolute;left:0;top:0"><path d="M7 13.5 L11.2 17.5 L19 9.5" fill="none" stroke="#C9DEF6" stroke-width="2.2" stroke-linecap="round" stroke-linejoin="round"/></svg></div>
<span class="t" style="left:2103.8px;top:131.9px;font-size:20.8px;color:#000;transform:scaleX(0.8661);">---</span>
<span class="t" style="left:2103.8px;top:175.8px;font-size:20.8px;color:#000;transform:scaleX(0.8661);">---</span>
<div class="cbd" style="left:2067.0px;top:226.7px;width:24.0px;height:24.1px;"></div>
<div class="cbd" style="left:2067.0px;top:270.9px;width:24.0px;height:24.0px;"></div>
<div class="cbd" style="left:2067.0px;top:315.0px;width:24.0px;height:24.0px;"></div>
<span class="t" style="left:2105.4px;top:226.1px;font-size:24.96px;color:#A3A3A3;transform:scaleX(0.8012);">0.0</span>
<span class="t" style="left:2105.4px;top:270.2px;font-size:24.96px;color:#A3A3A3;transform:scaleX(0.8012);">0.0</span>
<span class="t" style="left:2105.4px;top:314.3px;font-size:24.96px;color:#A3A3A3;transform:scaleX(0.8012);">0.0</span>
<span class="t" style="left:2188.0px;top:132.8px;font-size:22.15px;color:#000;transform:scaleX(0.9519);">Mass X</span>
<span class="t" style="left:2188.0px;top:176.7px;font-size:22.15px;color:#000;transform:scaleX(0.9571);">Mass Y</span>
<div class="num" style="left:2270.2px;top:122.9px;width:115.3px;height:38.4px;"></div>
<div style="left:2354.0px;top:126.4px;width:25.5px;height:14.7px;background:#FDFDFD;border:1px solid #D4D4D4"></div>
<div style="left:2354.0px;top:143.6px;width:25.5px;height:13.7px;background:#FDFDFD;border:1px solid #D4D4D4"></div>
<svg class="abs" style="left:2359.8px;top:128.9px" width="14" height="26.4" viewBox="0 0 14 26.4"><path d="M7 1 L12 8 H2Z" fill="#111"/><path d="M7 24.4 L12 17.4 H2Z" fill="#111"/></svg>
<span class="t" style="left:2274.6px;top:126.1px;font-size:25.48px;color:#000;transform:scaleX(0.8074);">0.0</span>
<div class="num" style="left:2270.2px;top:166.7px;width:115.3px;height:38.4px;"></div>
<div style="left:2354.0px;top:170.2px;width:25.5px;height:14.7px;background:#FDFDFD;border:1px solid #D4D4D4"></div>
<div style="left:2354.0px;top:187.4px;width:25.5px;height:13.7px;background:#FDFDFD;border:1px solid #D4D4D4"></div>
<svg class="abs" style="left:2359.8px;top:172.7px" width="14" height="26.4" viewBox="0 0 14 26.4"><path d="M7 1 L12 8 H2Z" fill="#111"/><path d="M7 24.4 L12 17.4 H2Z" fill="#111"/></svg>
<span class="t" style="left:2274.6px;top:170.0px;font-size:25.48px;color:#000;transform:scaleX(0.8074);">0.0</span>
<span class="t" style="left:2254.2px;top:207.7px;font-size:16.64px;color:#B4B4B4;transform:scaleX(0.8923);">Shape model</span>
<div class="cbd" style="left:2356.4px;top:207.9px;width:24.6px;height:22.9px;"></div>
<span class="t" style="left:2218.2px;top:236.5px;font-size:21.84px;color:#0A6A0A;transform:scaleX(0.9558);">dia = 71.6 km</span>
<span class="t" style="left:2180.6px;top:264.6px;font-size:21.84px;color:#1A1AF0;transform:scaleX(0.9825);">a/b: 1.00, dMag: 0.00</span>
<span class="t" style="left:2188.0px;top:325.1px;font-size:21.84px;color:#111;transform:scaleX(0.9743);">Motion: 11.29 km/s</span>
<div class="cbc" style="left:1734.0px;top:368.1px;width:25.7px;height:25.5px;"><svg width="25.7" height="25.5" viewBox="0 0 26 26" style="position:absolute;left:0;top:0"><path d="M7 13.5 L11.2 17.5 L19 9.5" fill="none" stroke="#C9DEF6" stroke-width="2.2" stroke-linecap="round" stroke-linejoin="round"/></svg></div>
<span class="t" style="left:1772.0px;top:367.9px;font-size:24.96px;color:#000;transform:scaleX(0.8141);">Circular</span>
<div class="cbc" style="left:1866.0px;top:368.1px;width:25.6px;height:25.5px;"><svg width="25.6" height="25.5" viewBox="0 0 26 26" style="position:absolute;left:0;top:0"><path d="M7 13.5 L11.2 17.5 L19 9.5" fill="none" stroke="#C9DEF6" stroke-width="2.2" stroke-linecap="round" stroke-linejoin="round"/></svg></div>
<span class="t" style="left:1904.4px;top:357.2px;font-size:21.32px;color:#000;transform:scaleX(0.9528);">Use assumed</span>
<span class="t" style="left:1904.4px;top:383.3px;font-size:21.32px;color:#000;transform:scaleX(0.9525);">dia (71.6 km)</span>
<div class="cb" style="left:2070.2px;top:368.1px;width:25.4px;height:25.5px;"></div>
<span class="t" style="left:2108.7px;top:368.3px;font-size:24.44px;color:#000;transform:scaleX(0.8647);">Include Miss events</span>
<div class="sunk" style="left:1730.7px;top:420.4px;width:643.3px;height:41.6px;background:#F0F0F0"></div>
<span class="t" style="left:1747.4px;top:429.8px;font-size:22.88px;color:#A9A9A9;font-weight:bold;transform:scaleX(1.0152);">Double stars - show</span>
<div class="rd" style="left:1997.7px;top:430.0px;width:26.0px;height:26.0px;background:#C3C3C3"><div class="rd" style="left:8.0px;top:8.0px;width:10px;height:10px;background:#fff"></div></div>
<span class="t" style="left:2035.2px;top:436.7px;font-size:17.16px;color:#A6A6A6;transform:scaleX(0.8867);">Both</span>
<div class="rd" style="left:2102.4px;top:430.5px;width:25.0px;height:25.0px;background:#F7F7F7;border:2px solid #CACACA"></div>
<span class="t" style="left:2138.1px;top:436.7px;font-size:17.16px;color:#A6A6A6;transform:scaleX(1.0642);">Primary</span>
<div class="rd" style="left:2232.4px;top:430.5px;width:25.0px;height:25.0px;background:#F7F7F7;border:2px solid #CACACA"></div>
<span class="t" style="left:2268.9px;top:436.7px;font-size:17.16px;color:#A6A6A6;transform:scaleX(1.0458);">Secondary</span>
<span class="t" style="left:1731.0px;top:487.9px;font-size:22.36px;color:#0B6B0B;font-weight:bold;transform:scaleX(1.1776);">Quality of the fit</span>
<div style="left:1942.8px;top:474.9px;width:433.2px;height:40.1px;background:#fff;border:2px solid #7A7A7A;border-radius:3px"></div>
<span class="t" style="left:1948.5px;top:479.9px;font-size:24.96px;color:#000;transform:scaleX(0.8263);">Astrometry only. No reliable size</span>
<svg class="abs" style="left:2348px;top:488px" width="20" height="13" viewBox="0 0 20 13"><path d="M2 2 L10 10 L18 2" fill="none" stroke="#555" stroke-width="1.8"/></svg>
<span class="t" style="left:1783.4px;top:527.9px;font-size:22.36px;color:#8E0A0A;font-weight:bold;transform:scaleX(1.0623);">Review flags</span>
<div class="sunk" style="left:1942.8px;top:519.0px;width:431.2px;height:39.0px;background:#E2FEFE"></div>
<div class="cb" style="left:1952.6px;top:526.4px;width:24.5px;height:24.5px;"></div>
<span class="t" style="left:1991.0px;top:526.9px;font-size:24.44px;color:#111;transform:scaleX(0.9906);">0 items are tagged for review</span>
<div class="sunk" style="left:1712.3px;top:562.3px;width:676.7px;height:164.2px;background:#E6FEFE;border-width:4px 2px 2px 4px"></div>
<span class="t" style="left:1729.0px;top:595.0px;font-size:23.61px;color:#8A1030;font-weight:bold;">P</span>
<span class="t" style="left:1729.7px;top:620.7px;font-size:23.61px;color:#8A1030;font-weight:bold;">L</span>
<span class="t" style="left:1727.8px;top:647.4px;font-size:23.61px;color:#8A1030;font-weight:bold;">O</span>
<span class="t" style="left:1729.7px;top:673.6px;font-size:23.61px;color:#8A1030;font-weight:bold;">T</span>
<span class="t" style="left:1769.5px;top:587.4px;font-size:23.4px;color:#86123A;font-weight:bold;transform:scaleX(1.0155);">Scale</span>
<div style="left:1845.5px;top:580.3px;width:538.5px;height:37.7px;background:#FFF6D2"></div>
<div style="left:1856.1px;top:590.5px;width:515.4px;height:7.2px;background:#E4E4E4;border:1px solid #CFCFCF"></div>
<div style="left:1845.5px;top:580.3px;width:538.5px;height:37.7px;"><div style="left:16.4px;top:30px;width:2px;height:7px;background:#B9B4A0"></div><div style="left:41.6px;top:30px;width:2px;height:7px;background:#B9B4A0"></div><div style="left:66.8px;top:30px;width:2px;height:7px;background:#B9B4A0"></div><div style="left:92.0px;top:30px;width:2px;height:7px;background:#B9B4A0"></div><div style="left:117.2px;top:30px;width:2px;height:7px;background:#B9B4A0"></div><div style="left:142.4px;top:30px;width:2px;height:7px;background:#B9B4A0"></div><div style="left:167.6px;top:30px;width:2px;height:7px;background:#B9B4A0"></div><div style="left:192.8px;top:30px;width:2px;height:7px;background:#B9B4A0"></div><div style="left:218.0px;top:30px;width:2px;height:7px;background:#B9B4A0"></div><div style="left:243.2px;top:30px;width:2px;height:7px;background:#B9B4A0"></div><div style="left:268.4px;top:30px;width:2px;height:7px;background:#B9B4A0"></div><div style="left:293.6px;top:30px;width:2px;height:7px;background:#B9B4A0"></div><div style="left:318.8px;top:30px;width:2px;height:7px;background:#B9B4A0"></div><div style="left:344.0px;top:30px;width:2px;height:7px;background:#B9B4A0"></div><div style="left:369.2px;top:30px;width:2px;height:7px;background:#B9B4A0"></div><div style="left:394.4px;top:30px;width:2px;height:7px;background:#B9B4A0"></div><div style="left:419.6px;top:30px;width:2px;height:7px;background:#B9B4A0"></div><div style="left:444.8px;top:30px;width:2px;height:7px;background:#B9B4A0"></div><div style="left:470.0px;top:30px;width:2px;height:7px;background:#B9B4A0"></div><div style="left:495.2px;top:30px;width:2px;height:7px;background:#B9B4A0"></div><div style="left:520.4px;top:30px;width:2px;height:7px;background:#B9B4A0"></div></div>
<svg class="abs" style="left:2108.2px;top:585.9px" width="12.0" height="19.1" viewBox="0 0 12.0 19.1"><path d="M0 0 H12.0 V14.1 L6.0 19.1 L0 14.1Z" fill="#0A74D6"/></svg>
<span class="t" style="left:1769.5px;top:639.4px;font-size:23.4px;color:#86123A;font-weight:bold;transform:scaleX(0.9781);">Size</span>
<div class="sunk" style="left:1828.4px;top:630.4px;width:325.6px;height:45.6px;background:#EEFBEA"></div>
<div class="rd" style="left:1848.0px;top:640.0px;width:26.0px;height:26.0px;background:#0F5FB6"><div class="rd" style="left:7.5px;top:7.5px;width:11px;height:11px;background:#fff"></div></div>
<span class="t" style="left:1885.6px;top:641.4px;font-size:23.4px;color:#86123A;font-weight:bold;transform:scaleX(0.9319);">normal</span>
<div class="rd" style="left:1976.1px;top:640.5px;width:25.0px;height:25.0px;background:#F4F4F4;border:2px solid #727272"></div>
<span class="t" style="left:2013.1px;top:641.4px;font-size:23.4px;color:#86123A;font-weight:bold;transform:scaleX(1.0544);">x 2</span>
<div class="rd" style="left:2063.8px;top:640.5px;width:25.0px;height:25.0px;background:#F4F4F4;border:2px solid #727272"></div>
<span class="t" style="left:2101.4px;top:641.4px;font-size:23.4px;color:#86123A;font-weight:bold;transform:scaleX(1.0667);">x 5</span>
<span class="t" style="left:2199.6px;top:642.0px;font-size:23.4px;color:#7F0F8F;font-weight:bold;transform:scaleX(0.9658);">Form opacity</span>
<span class="t" style="left:1771.1px;top:691.2px;font-size:23.4px;color:#8E0A14;font-weight:bold;transform:scaleX(1.0244);">Scroll range x1.25</span>
<div class="cb" style="left:1992.7px;top:690.3px;width:25.3px;height:25.2px;"></div>
<div style="left:2156.2px;top:676.6px;width:229.3px;height:40.9px;background:#FFF6D2"></div>
<div style="left:2168.6px;top:688.7px;width:201.4px;height:6.3px;background:#E4E4E4;border:1px solid #CFCFCF"></div>
<div style="left:2156.2px;top:676.6px;width:229.3px;height:40.9px;"><div style="left:19.8px;top:34px;width:2px;height:7px;background:#B9B4A0"></div><div style="left:57.9px;top:34px;width:2px;height:7px;background:#B9B4A0"></div><div style="left:95.7px;top:34px;width:2px;height:7px;background:#B9B4A0"></div><div style="left:132.2px;top:34px;width:2px;height:7px;background:#B9B4A0"></div><div style="left:170.0px;top:34px;width:2px;height:7px;background:#B9B4A0"></div><div style="left:208.1px;top:34px;width:2px;height:7px;background:#B9B4A0"></div></div>
<svg class="abs" style="left:2356.0px;top:680.4px" width="15.5" height="24.6" viewBox="0 0 15.5 24.6"><path d="M0 0 H15.5 V18.1 L7.8 24.6 L0 18.1Z" fill="#0A74D6"/></svg>
<span class="t" style="left:1740.9px;top:748.9px;font-size:23.92px;color:#111;transform:scaleX(0.8782);">RMS fit -4.5 ±0.0 km</span>
<div class="sunk" style="left:1724.5px;top:788.7px;width:654.5px;height:930.3px;background:#fff"></div>
<div style="left:1727.5px;top:1684.0px;width:649.5px;height:33.0px;background:#F0F0F0"></div>
<div style="left:1762.4px;top:1698.3px;width:479.6px;height:3.0px;background:#7F7F7F"></div>
<div style="left:1740.8px;top:804.3px;width:5.0px;height:5.0px;background:#FF7AC4;border-radius:50%"></div>
<div style="left:1770.5px;top:804.3px;width:5.0px;height:5.0px;background:#FF7AC4;border-radius:50%"></div>
<div style="left:1800.5px;top:804.3px;width:5.0px;height:5.0px;background:#FF7AC4;border-radius:50%"></div>
<div style="left:1830.3px;top:804.3px;width:5.0px;height:5.0px;background:#FF7AC4;border-radius:50%"></div>
<div style="left:1860.4px;top:804.3px;width:5.0px;height:5.0px;background:#FF7AC4;border-radius:50%"></div>
<div style="left:1738.6px;top:827.2px;width:131.1px;height:5.2px;background:#F41212"></div>
<span class="t" style="left:1916.1px;top:794.5px;font-size:27px;color:#1A1A1A;font-family:'Liberation Mono',monospace;transform-origin:0 20.7px;transform:scale(1.0000,0.84);">1(P) Predicted</span>
<span class="t" style="left:1916.1px;top:818.3px;font-size:27px;color:#1A1A1A;font-family:'Liberation Mono',monospace;transform-origin:0 20.7px;transform:scale(1.0000,0.84);">2    J Dunham, near Fountain</span>
<div style="left:1746.0px;top:1244.5px;width:900.5px;height:273.5px;background:#ABC2E6;border:2px solid #5E5E5E"></div>
<span class="t" style="left:1752.3px;top:1258.1px;font-size:24.96px;color:#1E3360;font-weight:bold;transform:scaleX(0.9516);">DAMIT</span>
<div style="left:1840.0px;top:1251.8px;width:28.0px;height:34.4px;background:#FDFDFD;border-radius:5px;box-shadow:0 0 1px #C8CED8"></div>
<div style="left:1844.2px;top:1256.0px;width:19.6px;height:26.0px;background:#00FA00"></div>
<span class="t" style="left:1847.3px;top:1256.5px;font-size:24.96px;color:#000;font-weight:bold;">1</span>
<div style="left:1876.0px;top:1251.8px;width:28.0px;height:34.4px;background:#FDFDFD;border-radius:5px;box-shadow:0 0 1px #C8CED8"></div>
<div style="left:1880.2px;top:1256.0px;width:19.6px;height:26.0px;background:#6FCDAC"></div>
<span class="t" style="left:1883.3px;top:1256.5px;font-size:24.96px;color:#000;">2</span>
<div style="left:1910.9px;top:1251.5px;width:29.4px;height:35.5px;background:#EDF0F7;border-radius:6px;border:2px solid #E2E7F2"></div>
<span class="t" style="left:1919.5px;top:1258.1px;font-size:22.88px;color:#A9A5A5;">3</span>
<div style="left:1947.6px;top:1251.5px;width:28.7px;height:35.5px;background:#EDF0F7;border-radius:6px;border:2px solid #E2E7F2"></div>
<span class="t" style="left:1955.8px;top:1258.1px;font-size:22.88px;color:#A9A5A5;">4</span>
<div style="left:1983.6px;top:1251.5px;width:28.6px;height:35.5px;background:#EDF0F7;border-radius:6px;border:2px solid #E2E7F2"></div>
<span class="t" style="left:1991.8px;top:1258.1px;font-size:22.88px;color:#A9A5A5;">5</span>
<div style="left:2019.6px;top:1251.5px;width:29.1px;height:35.5px;background:#EDF0F7;border-radius:6px;border:2px solid #E2E7F2"></div>
<span class="t" style="left:2028.0px;top:1258.1px;font-size:22.88px;color:#A9A5A5;">6</span>
<div style="left:2061.9px;top:1251.8px;width:139.8px;height:35.6px;background:#FDFDFD;border-radius:5px"></div>
<div style="left:2066.0px;top:1256.0px;width:132.0px;height:27.8px;background:#AFEDEC"></div>
<span class="t" style="left:2072.5px;top:1257.2px;font-size:24.44px;color:#14224A;transform:scaleX(0.8621);">Light curves</span>
<span class="t" style="left:2215.6px;top:1258.1px;font-size:24.96px;color:#1E3360;font-weight:bold;transform:scaleX(0.9295);">ISAM</span>
<div style="left:2287.4px;top:1251.5px;width:29.4px;height:35.5px;background:#EDF0F7;border-radius:6px;border:2px solid #E2E7F2"></div>
<span class="t" style="left:2296.0px;top:1258.1px;font-size:22.88px;color:#A9A5A5;">1</span>
<div style="left:2335.3px;top:1251.5px;width:29.4px;height:35.5px;background:#EDF0F7;border-radius:6px;border:2px solid #E2E7F2"></div>
<span class="t" style="left:2343.9px;top:1258.1px;font-size:22.88px;color:#A9A5A5;">2</span>
<div style="left:2383.2px;top:1251.5px;width:29.4px;height:35.5px;background:#EDF0F7;border-radius:6px;border:2px solid #E2E7F2"></div>
<span class="t" style="left:2391.8px;top:1258.1px;font-size:22.88px;color:#A9A5A5;">3</span>
<div style="left:2431.1px;top:1251.5px;width:29.4px;height:35.5px;background:#EDF0F7;border-radius:6px;border:2px solid #E2E7F2"></div>
<span class="t" style="left:2439.7px;top:1258.1px;font-size:22.88px;color:#A9A5A5;">4</span>
<div style="left:2479.0px;top:1251.5px;width:29.4px;height:35.5px;background:#EDF0F7;border-radius:6px;border:2px solid #E2E7F2"></div>
<span class="t" style="left:2487.6px;top:1258.1px;font-size:22.88px;color:#A9A5A5;">5</span>
<div style="left:2526.9px;top:1251.5px;width:29.4px;height:35.5px;background:#EDF0F7;border-radius:6px;border:2px solid #E2E7F2"></div>
<span class="t" style="left:2535.5px;top:1258.1px;font-size:22.88px;color:#A9A5A5;">6</span>
<div style="left:2575.9px;top:1250.6px;width:27.8px;height:33.2px;background:#FDFDFD;border-radius:3px"></div>
<div style="left:2580.0px;top:1254.4px;width:20.0px;height:25.3px;background:#3547C8"></div>
<span class="t" style="left:2584.2px;top:1254.9px;font-size:24.96px;color:#FFEF00;font-weight:bold;transform:scaleX(0.7739);">?</span>
<div style="left:2608.6px;top:1250.6px;width:28.7px;height:33.2px;background:#FDFDFD;border-radius:3px"></div>
<div style="left:2612.4px;top:1254.4px;width:21.6px;height:25.3px;background:#DC1438"></div>
<span class="t" style="left:2615.5px;top:1255.2px;font-size:24.96px;color:#FFF;font-weight:bold;transform:scaleX(0.9310);">X</span>
<span class="t" style="left:1762.9px;top:1290.9px;font-size:24.44px;color:#3B4F7D;transform:scaleX(0.8445);">Source</span>
<span class="t" style="left:1880.6px;top:1290.9px;font-size:24.44px;color:#3B4F7D;transform:scaleX(0.7897);">ID</span>
<span class="t" style="left:1949.3px;top:1290.9px;font-size:24.44px;color:#3B4F7D;transform:scaleX(0.8751);">Surf/Vol</span>
<div style="left:1757.2px;top:1318.5px;width:77.3px;height:37.0px;background:#F1F1F6;border:1px solid #E4E6EE;border-bottom:2px solid #8A8A8A;border-radius:3px"></div>
<span class="t" style="left:1763.7px;top:1324.8px;font-size:24.44px;color:#111;transform:scaleX(0.8168);">DAMIT</span>
<div style="left:1838.1px;top:1318.5px;width:107.6px;height:37.3px;background:#F1F1F6;border:1px solid #E4E6EE;border-bottom:3px solid #0A64C2;border-radius:3px"></div>
<div style="left:1843.8px;top:1324.2px;width:48.2px;height:25.8px;background:#0A74D6"></div>
<span class="t" style="left:1845.0px;top:1324.8px;font-size:24.44px;color:#FFF;transform:scaleX(0.8368);">5972</span>
<div style="left:1891.5px;top:1324.2px;width:1.8px;height:25.8px;background:#F08A3C"></div>
<div style="left:1949.6px;top:1318.5px;width:74.6px;height:37.0px;background:#F1F1F6;border:1px solid #E4E6EE;border-bottom:2px solid #8A8A8A;border-radius:3px"></div>
<span class="t" style="left:1955.8px;top:1324.8px;font-size:24.44px;color:#111;transform:scaleX(0.8290);">1.007</span>
<div style="left:1752.3px;top:1358.5px;width:68.0px;height:41.0px;background:#FFFF00;border:2.5px solid #5E5E22"></div>
<span class="t" style="left:1767.8px;top:1366.1px;font-size:24.96px;color:#000;font-weight:bold;transform:scaleX(0.9062);">Dia</span>
<span class="t" style="left:1828.3px;top:1363.4px;font-size:23.92px;color:#44598A;font-style:italic;transform:scaleX(0.8497);">Values in memory =&gt;</span>
<div class="sunk" style="left:2029.4px;top:1292.3px;width:606.6px;height:99.7px;background:#FFF6D8"></div>
<span class="t" style="left:2076.6px;top:1292.1px;font-size:24.44px;color:#111;transform:scaleX(0.8290);">Fit quality</span>
<span class="t" style="left:2232.7px;top:1292.1px;font-size:24.44px;color:#111;transform:scaleX(0.8108);">Ph Corrn</span>
<span class="t" style="left:2335.6px;top:1292.1px;font-size:24.44px;color:#111;transform:scaleX(0.8143);">Minimum dia</span>
<span class="t" style="left:2487.6px;top:1294.2px;font-size:24.44px;color:#111;transform:scaleX(0.8161);">Maximum dia</span>
<div style="left:2034.9px;top:1320.4px;width:192.1px;height:40.6px;background:#fff;border:2px solid #7A7A7A;border-radius:3px"></div>
<span class="t" style="left:2040.6px;top:1326.0px;font-size:24.96px;color:#111;transform:scaleX(0.8399);">Not fitted</span>
<svg class="abs" style="left:2201px;top:1335px" width="19" height="12" viewBox="0 0 19 12"><path d="M1.5 2 L9.5 10 L17.5 2" fill="none" stroke="#555" stroke-width="1.7"/></svg>
<div style="left:2237.7px;top:1322.6px;width:74.3px;height:34.9px;background:#F0F0F0;border:1px solid #E2E2E2;border-bottom:2px solid #8A8A8A;border-radius:3px"></div>
<span class="t" style="left:2241.7px;top:1326.0px;font-size:24.96px;color:#222;transform:scaleX(0.7878);">0°</span>
<div style="left:2329.9px;top:1322.4px;width:74.4px;height:36.4px;background:#FFB8C4;border:2px solid #F3E3E0;border-bottom:2.5px solid #8A8A8A;border-radius:3px"></div>
<span class="t" style="left:2334.1px;top:1326.0px;font-size:24.96px;color:#111;transform:scaleX(0.7672);">61</span>
<div style="left:2486.0px;top:1322.4px;width:74.1px;height:36.4px;background:#FFB8C4;border:2px solid #F3E3E0;border-bottom:2.5px solid #8A8A8A;border-radius:3px"></div>
<div style="left:2409.7px;top:1321.8px;width:59.1px;height:44.9px;background:#FDFDFD;border-radius:6px;box-shadow:0 0 1px #C9C3A8"></div>
<div style="left:2414.2px;top:1326.2px;width:50.1px;height:35.6px;background:#A4F530"></div>
<span class="t" style="left:2424.3px;top:1330.6px;font-size:24.96px;color:#000;transform:scaleX(0.7767);">Set</span>
<div style="left:2565.3px;top:1321.8px;width:59.7px;height:44.9px;background:#FDFDFD;border-radius:6px;box-shadow:0 0 1px #C9C3A8"></div>
<div style="left:2569.8px;top:1326.2px;width:50.7px;height:35.6px;background:#A4F530"></div>
<span class="t" style="left:2580.2px;top:1330.6px;font-size:24.96px;color:#000;transform:scaleX(0.7767);">Set</span>
<span class="t" style="left:2039.8px;top:1362.0px;font-size:24.96px;color:#5A0F8C;transform:scaleX(0.8269);">Not fitted</span>
<span class="t" style="left:2240.9px;top:1362.0px;font-size:24.96px;color:#5A0F8C;transform:scaleX(0.7878);">0°</span>
<span class="t" style="left:2332.8px;top:1362.0px;font-size:24.96px;color:#5A0F8C;transform:scaleX(0.7636);">61</span>
<span class="t" style="left:2490.1px;top:1364.6px;font-size:22.88px;color:#2A1AA0;transform:scaleX(0.8517);">- - - -</span>
<span class="t" style="left:2029.4px;top:1397.3px;font-size:21.84px;color:#000;font-weight:bold;transform:scaleX(1.0841);">The SM fit has not been considered</span>
<span class="t" style="left:1762.9px;top:1426.9px;font-size:24.44px;color:#3B4F7D;transform:scaleX(0.8386);">Version info</span>
<div style="left:1882.3px;top:1423.5px;width:538.3px;height:35.5px;background:#F1F1F6;border:1px solid #E4E6EE;border-bottom:2px solid #8A8A8A;border-radius:3px"></div>
<span class="t" style="left:1888.0px;top:1428.9px;font-size:24.44px;color:#111;transform:scaleX(0.8459);">2022-02-14, Q=1</span>
<span class="t" style="left:1760.4px;top:1468.6px;font-size:24.44px;color:#3B4F7D;transform:scaleX(0.8439);">Image scale</span>
<div style="left:1883.0px;top:1464.3px;width:539.0px;height:43.3px;background:#FFF6D2"></div>
<div style="left:1883.0px;top:1464.3px;width:539.0px;height:43.3px;"><div style="left:20.6px;top:10.2px;width:2px;height:7.8px;background:#B7B2A6"></div><div style="left:32.7px;top:10.2px;width:2px;height:7.8px;background:#B7B2A6"></div><div style="left:44.8px;top:10.2px;width:2px;height:7.8px;background:#B7B2A6"></div><div style="left:57.0px;top:10.2px;width:2px;height:7.8px;background:#B7B2A6"></div><div style="left:69.1px;top:10.2px;width:2px;height:7.8px;background:#B7B2A6"></div><div style="left:81.2px;top:10.2px;width:2px;height:7.8px;background:#B7B2A6"></div><div style="left:93.3px;top:10.2px;width:2px;height:7.8px;background:#B7B2A6"></div><div style="left:105.5px;top:10.2px;width:2px;height:7.8px;background:#B7B2A6"></div><div style="left:117.6px;top:10.2px;width:2px;height:7.8px;background:#B7B2A6"></div><div style="left:129.7px;top:10.2px;width:2px;height:7.8px;background:#B7B2A6"></div><div style="left:141.8px;top:10.2px;width:2px;height:7.8px;background:#B7B2A6"></div><div style="left:154.0px;top:10.2px;width:2px;height:7.8px;background:#B7B2A6"></div><div style="left:166.1px;top:10.2px;width:2px;height:7.8px;background:#B7B2A6"></div><div style="left:178.2px;top:10.2px;width:2px;height:7.8px;background:#B7B2A6"></div><div style="left:190.3px;top:10.2px;width:2px;height:7.8px;background:#B7B2A6"></div><div style="left:202.5px;top:10.2px;width:2px;height:7.8px;background:#B7B2A6"></div><div style="left:214.6px;top:10.2px;width:2px;height:7.8px;background:#B7B2A6"></div><div style="left:226.7px;top:10.2px;width:2px;height:7.8px;background:#B7B2A6"></div><div style="left:238.8px;top:10.2px;width:2px;height:7.8px;background:#B7B2A6"></div><div style="left:251.0px;top:10.2px;width:2px;height:7.8px;background:#B7B2A6"></div><div style="left:263.1px;top:10.2px;width:2px;height:7.8px;background:#B7B2A6"></div><div style="left:275.2px;top:10.2px;width:2px;height:7.8px;background:#B7B2A6"></div><div style="left:287.3px;top:10.2px;width:2px;height:7.8px;background:#B7B2A6"></div><div style="left:299.5px;top:10.2px;width:2px;height:7.8px;background:#B7B2A6"></div><div style="left:311.6px;top:10.2px;width:2px;height:7.8px;background:#B7B2A6"></div><div style="left:323.7px;top:10.2px;width:2px;height:7.8px;background:#B7B2A6"></div><div style="left:335.8px;top:10.2px;width:2px;height:7.8px;background:#B7B2A6"></div><div style="left:348.0px;top:10.2px;width:2px;height:7.8px;background:#B7B2A6"></div><div style="left:360.1px;top:10.2px;width:2px;height:7.8px;background:#B7B2A6"></div><div style="left:372.2px;top:10.2px;width:2px;height:7.8px;background:#B7B2A6"></div><div style="left:384.3px;top:10.2px;width:2px;height:7.8px;background:#B7B2A6"></div><div style="left:396.5px;top:10.2px;width:2px;height:7.8px;background:#B7B2A6"></div><div style="left:408.6px;top:10.2px;width:2px;height:7.8px;background:#B7B2A6"></div><div style="left:420.7px;top:10.2px;width:2px;height:7.8px;background:#B7B2A6"></div><div style="left:432.8px;top:10.2px;width:2px;height:7.8px;background:#B7B2A6"></div><div style="left:445.0px;top:10.2px;width:2px;height:7.8px;background:#B7B2A6"></div><div style="left:457.1px;top:10.2px;width:2px;height:7.8px;background:#B7B2A6"></div><div style="left:469.2px;top:10.2px;width:2px;height:7.8px;background:#B7B2A6"></div><div style="left:481.3px;top:10.2px;width:2px;height:7.8px;background:#B7B2A6"></div><div style="left:493.5px;top:10.2px;width:2px;height:7.8px;background:#B7B2A6"></div><div style="left:505.6px;top:10.2px;width:2px;height:7.8px;background:#B7B2A6"></div><div style="left:517.7px;top:10.2px;width:2px;height:7.8px;background:#B7B2A6"></div></div>
<div style="left:1896.0px;top:1496.8px;width:512.4px;height:6.8px;background:#E4E4E4;border:1px solid #CDCDCD"></div>
<svg class="abs" style="left:2142.6px;top:1486.3px" width="15.8" height="21.3" viewBox="0 0 15.8 21.3"><path d="M0 21.3 V7 Q0 1 7.9 0 Q15.8 1 15.8 7 V21.3Z" fill="#0A74D6"/></svg>
<div style="left:2441.9px;top:1425.6px;width:193.1px;height:85.4px;background:#FDFDFD;border-radius:7px"></div>
<div style="left:2446.0px;top:1430.0px;width:184.4px;height:75.5px;background:#FFBCC8"></div>
<span class="t" style="left:2463.1px;top:1443.0px;font-size:24.44px;color:#B0102E;font-weight:bold;transform:scaleX(1.0168);">Save/update</span>
<span class="t" style="left:2469.7px;top:1468.6px;font-size:24.44px;color:#B0102E;font-weight:bold;transform:scaleX(0.9757);">model 5972</span>
</body></html>
